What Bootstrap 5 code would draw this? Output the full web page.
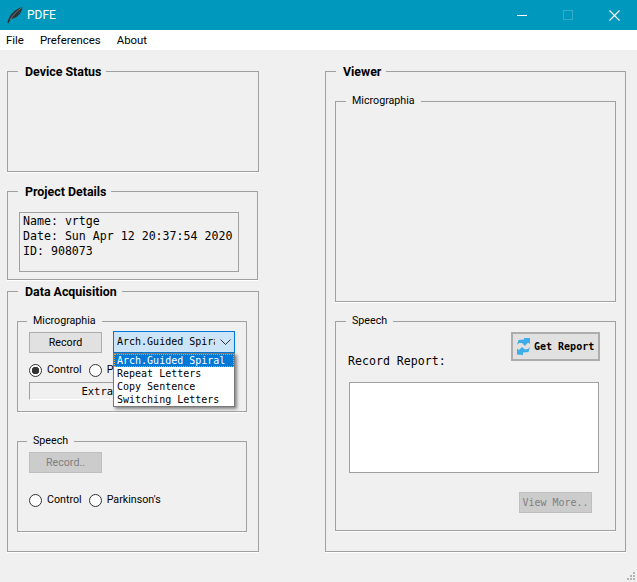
<!DOCTYPE html>
<html lang="en">
<head>
<meta charset="UTF-8">
<title>PDFE</title>
<link href="https://cdn.jsdelivr.net/npm/bootstrap@5.3.0/dist/css/bootstrap.min.css" rel="stylesheet">
<style>
body { background: #f0f0f0; font-family: Roboto, sans-serif; font-size: 10.7px; color: #000; overflow: hidden; }
.app-window { width: 637px; height: 582px; }
.title-bar { height: 30px; background: #0098bc; color: #fff; padding-left: 7px; font-size: 12px; }
.title-text { margin-left: 4px; }
.win-controls { margin-left: auto; }
.win-btn { width: 46px; height: 30px; }
.menu-bar { height: 20px; background: #fff; padding: 1px 0 0 6px; gap: 16px; font-size: 11.4px; }
.work-area { height: 512px; padding: 13px 0 0 7px; }
.left-col { width: 252px; }
.right-col { width: 301px; margin-left: 66px; }

.group-box { border: 1px solid #a0a0a0; padding: 0; margin: 0; box-shadow: 0 1px 0 #fff; }
.group-box > legend { float: none; width: auto; margin: 0 0 0 10px; padding: 1px 5px 0 7px; font-size: 12.4px; line-height: 16px; font-weight: 700; }
.sub-box { width: 230px; height: 99px; margin-left: 9px; }
.group-box.sub-box > legend { margin-left: 9px; padding: 0 6px; font-size: 10.7px; font-weight: 400; }
.group-box.sub-wide { width: 281px; }
.group-box.sub-wide > legend { margin-left: 10px; }
.box-device { height: 109px; }
.box-project { width: 251px; height: 97px; margin-top: 11px; }
.box-data { height: 269px; margin-top: 3px; }
.box-viewer { height: 489px; }
.sub-first { margin-top: 13px; }
.sub-second { margin-top: 21px; }
.view-mic { height: 209px; }
.view-speech { height: 218px; margin-top: 11px; }

.mono { font-family: "DejaVu Sans Mono", monospace; }
.info-frame { width: 220px; height: 60px; margin: 12px 0 0 11px; border: 1px solid #a0a0a0; border-right-color: #fff; border-bottom-color: #fff; outline: 1px solid #a0a0a0; outline-offset: -1px; padding: 1px 3px; font-size: 11.6px; line-height: 15px; white-space: nowrap; }

.btn.qt-btn { --bs-btn-padding-x: 0; --bs-btn-padding-y: 0; width: 73px; height: 21px; border: 1px solid #adadad; border-radius: 0; background: #e1e1e1; color: #000; font-size: 10.7px; line-height: 19px; }
.btn.qt-off { background: #cccccc; border-color: #bfbfbf; color: #808080; opacity: 1; }
.btn.qt-view { font-size: 10px; }
.btn.qt-report { width: 89px; height: 29px; border-width: 2px; border-color: #adadad; font-size: 10px; font-weight: 700; line-height: 25px; gap: 3px; padding-left: 3px; }
.btn.qt-extract { width: 206px; height: 18px; background: transparent; border-color: #a0a0a0 #fff #fff #a0a0a0; font-size: 10.5px; line-height: 16px; }

.acq-row { padding: 3px 0 0 11px; }
.combo-wrap { position: relative; width: 122px; height: 22px; margin: -1px 0 0 11px; }
.combo-box { height: 22px; background: #cce4f7; border: 1px solid #0078d7; padding-left: 3px; font-size: 10px; line-height: 20px; }
.combo-text { width: 98px; overflow: hidden; white-space: nowrap; }
.combo-arrow { margin: 0 3px 0 auto; }
.dropdown-menu.combo-list { position: absolute; top: 22px; left: 0; min-width: 0; width: 122px; padding: 0; border: 1px solid #7a7a7a; border-radius: 0; background: #fff; box-shadow: 2px 2px 3px rgba(0, 0, 0, .45); font-size: 10px; display: block; }
.combo-list .dropdown-item { padding: 0 0 0 3px; height: 13px; line-height: 13px; font-size: 10px; color: #000; }
.combo-list .dropdown-item.active { background: #0078d7; color: #fff; outline: 1px dotted #e8a33d; outline-offset: -1px; }

.radio-row { padding-left: 11px; height: 14px; line-height: 14px; }
.radio-row .form-check-input { width: 13px; height: 13px; margin: 0 5px 0 0; border: 1px solid #333; background-color: #fff; background-image: none; flex: none; }
.radio-row .form-check-input:checked { background-color: #fff; background-image: radial-gradient(circle, #333 0 3.5px, #fff 4px); border-color: #333; }
.radio-row .form-check-label { margin-right: 7px; }
.row-mic { margin-top: 10px; }
.row-speech { margin-top: 20px; }
.extract-row { margin: 5px 0 0 11px; }

.report-top { padding: 3px 0 0 12px; height: 53px; }
.report-label { font-size: 11.6px; margin-top: 22px; line-height: 15px; }
.report-btn-wrap { margin: 0 0 0 auto; padding-right: 15px; }
.report-area { width: 250px; height: 91px; margin: 0 0 0 13px; border: 1px solid #a0a0a0; border-radius: 0; background: #fff; resize: none; display: block; }
.view-row { padding: 19px 23px 0 0; }

.status-bar { height: 20px; padding: 0 1px 1px 0; }
</style>
</head>
<body>
<div class="app-window d-flex flex-column">
    <div class="title-bar d-flex align-items-center">
        <svg width="16" height="18" viewBox="0 0 16 18">
            <path d="M0.5 17 C1 11 7 3 15.5 1 C15 7 10 12.5 4 13 L1.2 17.5 Z" fill="#2d3336"/>
            <path d="M3 14 C6 9 10 5 15 1.5" fill="none" stroke="#7d8588" stroke-width=".8"/>
        </svg>
        <span class="title-text">PDFE</span>
        <div class="win-controls d-flex">
            <div class="win-btn d-flex align-items-center justify-content-center"><svg width="10" height="10"><path d="M0 5.5H10" stroke="#fff"/></svg></div>
            <div class="win-btn d-flex align-items-center justify-content-center"><svg width="10" height="10"><rect x=".5" y=".5" width="9" height="9" fill="none" stroke="#33abc9"/></svg></div>
            <div class="win-btn d-flex align-items-center justify-content-center"><svg width="11" height="11"><path d="M.5 .5L10.5 10.5M10.5 .5L.5 10.5" stroke="#fff" stroke-width="1.1"/></svg></div>
        </div>
    </div>
    <div class="menu-bar d-flex align-items-center">
        <span>File</span><span>Preferences</span><span>About</span>
    </div>

    <div class="work-area d-flex">
        <div class="left-col">
            <fieldset class="group-box box-device"><legend>Device Status</legend></fieldset>

            <fieldset class="group-box box-project">
                <legend>Project Details</legend>
                <div class="info-frame mono">Name: vrtge<br>Date: Sun Apr 12 20:37:54 2020<br>ID: 908073</div>
            </fieldset>

            <fieldset class="group-box box-data">
                <legend>Data Acquisition</legend>
                <fieldset class="group-box sub-box sub-first">
                    <legend>Micrographia</legend>
                    <div class="acq-row d-flex">
                        <button type="button" class="btn qt-btn">Record</button>
                        <div class="combo-wrap mono">
                            <div class="combo-box d-flex align-items-center">
                                <div class="combo-text">Arch.Guided Spiral</div>
                                <svg class="combo-arrow" width="11" height="6"><path d="M.5 .5L5.5 5.5L10.5 .5" fill="none" stroke="#333"/></svg>
                            </div>
                            <div class="dropdown-menu combo-list">
                                <a class="dropdown-item active" href="#">Arch.Guided Spiral</a>
                                <a class="dropdown-item" href="#">Repeat Letters</a>
                                <a class="dropdown-item" href="#">Copy Sentence</a>
                                <a class="dropdown-item" href="#">Switching Letters</a>
                            </div>
                        </div>
                    </div>
                    <div class="radio-row row-mic d-flex align-items-center">
                        <input class="form-check-input" type="radio" name="mic" id="micControl" checked>
                        <label class="form-check-label" for="micControl">Control</label>
                        <input class="form-check-input" type="radio" name="mic" id="micPark">
                        <label class="form-check-label" for="micPark">Parkinson's</label>
                    </div>
                    <div class="extract-row">
                        <button type="button" class="btn qt-btn qt-extract mono">Extract Features</button>
                    </div>
                </fieldset>

                <fieldset class="group-box sub-box sub-second">
                    <legend>Speech</legend>
                    <div class="acq-row">
                        <button type="button" class="btn qt-btn qt-off" disabled>Record..</button>
                    </div>
                    <div class="radio-row row-speech d-flex align-items-center">
                        <input class="form-check-input" type="radio" name="speech" id="spControl">
                        <label class="form-check-label" for="spControl">Control</label>
                        <input class="form-check-input" type="radio" name="speech" id="spPark">
                        <label class="form-check-label" for="spPark">Parkinson's</label>
                    </div>
                </fieldset>
            </fieldset>
        </div>

        <div class="right-col">
            <fieldset class="group-box box-viewer">
                <legend>Viewer</legend>
                <fieldset class="group-box sub-box sub-wide view-mic sub-first">
                    <legend>Micrographia</legend>
                </fieldset>
                <fieldset class="group-box sub-box sub-wide view-speech">
                    <legend>Speech</legend>
                    <div class="report-top d-flex">
                        <div class="report-label mono">Record Report:</div>
                        <div class="report-btn-wrap">
                            <button type="button" class="btn qt-btn qt-report mono d-flex align-items-center">
                                <svg width="15" height="17" viewBox="0 0 15 17">
                                    <path d="M1 7 L2.5 2 L8 1.5 L8 0 L14 0 L14 6 L12 4.5 L9 8 L6 5 L3 5 Z" fill="#3daee9"/>
                                    <path d="M14 9 L12.5 14 L7 14.5 L7 17 L1 16.5 L1 10.5 L3 12 L6 9 L9 11.5 L12 11 Z" fill="#3daee9"/>
                                </svg>
                                <span>Get Report</span>
                            </button>
                        </div>
                    </div>
                    <textarea class="report-area"></textarea>
                    <div class="view-row d-flex justify-content-end">
                        <button type="button" class="btn qt-btn qt-off qt-view mono" disabled>View More..</button>
                    </div>
                </fieldset>
            </fieldset>
        </div>
    </div>

    <div class="status-bar d-flex justify-content-end align-items-end">
        <svg width="10" height="10" fill="#b5b5b5">
            <rect x="7" y="1" width="2" height="2"/><rect x="4" y="4" width="2" height="2"/><rect x="7" y="4" width="2" height="2"/>
            <rect x="1" y="7" width="2" height="2"/><rect x="4" y="7" width="2" height="2"/><rect x="7" y="7" width="2" height="2"/>
        </svg>
    </div>
</div>
</body>
</html>
